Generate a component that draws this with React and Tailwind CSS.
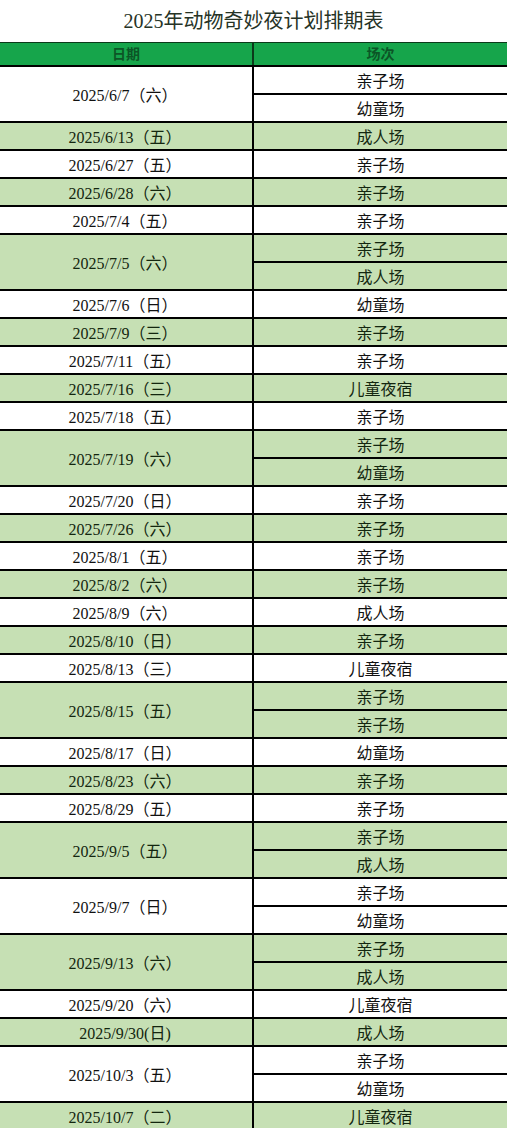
const schedule = [
  { date: "2025/6/7（六）", shows: ["亲子场", "幼童场"] },
  { date: "2025/6/13（五）", shows: ["成人场"] },
  { date: "2025/6/27（五）", shows: ["亲子场"] },
  { date: "2025/6/28（六）", shows: ["亲子场"] },
  { date: "2025/7/4（五）", shows: ["亲子场"] },
  { date: "2025/7/5（六）", shows: ["亲子场", "成人场"] },
  { date: "2025/7/6（日）", shows: ["幼童场"] },
  { date: "2025/7/9（三）", shows: ["亲子场"] },
  { date: "2025/7/11（五）", shows: ["亲子场"] },
  { date: "2025/7/16（三）", shows: ["儿童夜宿"] },
  { date: "2025/7/18（五）", shows: ["亲子场"] },
  { date: "2025/7/19（六）", shows: ["亲子场", "幼童场"] },
  { date: "2025/7/20（日）", shows: ["亲子场"] },
  { date: "2025/7/26（六）", shows: ["亲子场"] },
  { date: "2025/8/1（五）", shows: ["亲子场"] },
  { date: "2025/8/2（六）", shows: ["亲子场"] },
  { date: "2025/8/9（六）", shows: ["成人场"] },
  { date: "2025/8/10（日）", shows: ["亲子场"] },
  { date: "2025/8/13（三）", shows: ["儿童夜宿"] },
  { date: "2025/8/15（五）", shows: ["亲子场", "亲子场"] },
  { date: "2025/8/17（日）", shows: ["幼童场"] },
  { date: "2025/8/23（六）", shows: ["亲子场"] },
  { date: "2025/8/29（五）", shows: ["亲子场"] },
  { date: "2025/9/5（五）", shows: ["亲子场", "成人场"] },
  { date: "2025/9/7（日）", shows: ["亲子场", "幼童场"] },
  { date: "2025/9/13（六）", shows: ["亲子场", "成人场"] },
  { date: "2025/9/20（六）", shows: ["儿童夜宿"] },
  { date: "2025/9/30(日)", shows: ["成人场"] },
  { date: "2025/10/3（五）", shows: ["亲子场", "幼童场"] },
  { date: "2025/10/7（二）", shows: ["儿童夜宿"] },
];

const font = { fontFamily: '"Liberation Serif", "Noto Sans CJK SC", serif' };

export default function App() {
  return (
    <div className="h-[1128px] w-[507px] overflow-hidden bg-white" style={font}>
      <h1 className="flex h-[42px] items-center justify-center text-[20px] font-normal text-[#263326]">
        2025年动物奇妙夜计划排期表
      </h1>
      <div className="flex h-[23px] border-t border-[#0b3a1a] bg-[#16a54b] text-[14px] font-bold text-[#0c5526]">
        <div className="flex w-[254px] items-center justify-center border-r-2 border-[#0b3a1a]">
          日期
        </div>
        <div className="flex flex-1 items-center justify-center">场次</div>
      </div>
      {schedule.map((row, i) => {
        const green = i % 2 === 1;
        return (
          <div
            key={row.date}
            className={`flex border-t-2 border-black text-[16px] leading-[20px] ${
              green ? "bg-[#c6e0b4] text-[#13260f]" : "bg-white text-[#111]"
            }`}
          >
            <div className="flex w-[254px] items-center justify-center border-r-2 border-black pt-[3px] pr-[2px]">
              {row.date}
            </div>
            <div className="flex flex-1 flex-col">
              {row.shows.map((show, j) => (
                <div
                  key={j}
                  className={`flex items-center justify-center pt-[3px] ${
                    j > 0 ? "h-[28px] border-t-2 border-black" : "h-[26px]"
                  }`}
                >
                  {show}
                </div>
              ))}
            </div>
          </div>
        );
      })}
    </div>
  );
}
